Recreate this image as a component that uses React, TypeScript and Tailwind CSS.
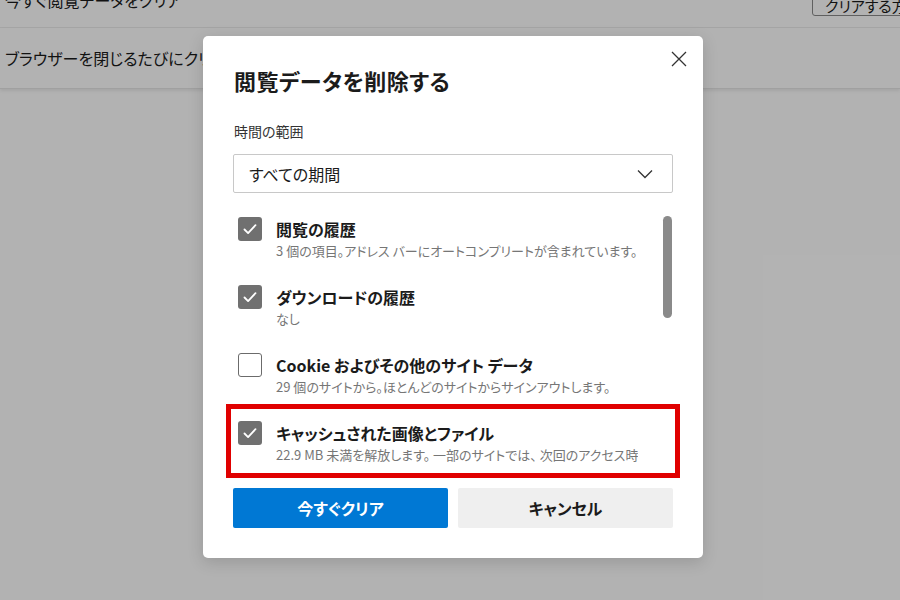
import { useState } from 'react'

const rows = [
  { title: '閲覧の履歴', sub: '3 個の項目。アドレス バーにオートコンプリートが含まれています。', checked: true },
  { title: 'ダウンロードの履歴', sub: 'なし', checked: true },
  { title: 'Cookie およびその他のサイト データ', sub: '29 個のサイトから。ほとんどのサイトからサインアウトします。', checked: false },
  { title: 'キャッシュされた画像とファイル', sub: '22.9 MB 未満を解放します。 一部のサイトでは、 次回のアクセス時', checked: true, marked: true },
]

const Check = ({ on }: { on: boolean }) =>
  on ? (
    <div className="w-[24px] h-[24px] rounded-[3px] bg-[#707070] flex items-center justify-center shrink-0">
      <svg width="16" height="16" viewBox="0 0 16 16" fill="none">
        <path d="M2.5 8.5l3.6 3.6L13.5 4.2" stroke="white" strokeWidth="1.8" strokeLinecap="round" strokeLinejoin="round" />
      </svg>
    </div>
  ) : (
    <div className="w-[24px] h-[24px] rounded-[3px] border border-[#6b6b6b] bg-white shrink-0" />
  )

export default function App() {
  const [items, setItems] = useState(rows)

  return (
    <div className="relative w-[900px] h-[600px] overflow-hidden bg-white font-['Noto_Sans_CJK_JP',sans-serif] [font-feature-settings:'palt'] text-[#1b1b1b]">
      {/* page behind */}
      <div className="flex items-start h-[28px] border-b border-[#ececec]">
        <div className="pl-[5px] text-[16px] leading-[16px] -mt-[8px]">今すぐ閲覧データをクリア</div>
        <div className="ml-auto mr-[-40px] -mt-[10px] h-[26px] w-[128px] border border-[#8a8a8a] rounded-[3px] px-[12px] text-[15px] leading-[30px] whitespace-nowrap overflow-hidden">
          クリアする方法
        </div>
      </div>
      <div className="h-[61px] flex items-center pl-[5px] text-[16px] border-b border-[#e6e6e6] shadow-[0_2px_3px_rgba(0,0,0,0.08)]">
        ブラウザーを閉じるたびにクリアするデータを選択する
      </div>

      {/* dim */}
      <div className="absolute inset-0 bg-black/30" />

      {/* dialog */}
      <div className="absolute left-[203px] top-[36px] w-[500px] bg-white rounded-[5px] shadow-[0_4px_16px_rgba(0,0,0,0.15)] pl-[30px] pr-[30px] pt-[29px] pb-[30px]">
        <button className="absolute right-[16px] top-[15px] w-[16px] h-[16px]">
          <svg width="16" height="16" viewBox="0 0 16 16">
            <path d="M1 1l14 14M15 1L1 15" stroke="#333" strokeWidth="1.3" />
          </svg>
        </button>

        <h2 className="text-[22px] leading-[30px] font-semibold tracking-[0.5px] pl-[1px]">閲覧データを削除する</h2>

        <div className="mt-[26px] text-[14px] leading-[20px] text-[#333] pl-[1px]">時間の範囲</div>
        <div className="mt-[13px] h-[39px] border border-[#c8c8c8] rounded-[2px] flex items-center pl-[15px] pr-[19px]">
          <span className="text-[16px]">すべての期間</span>
          <svg className="ml-auto" width="16" height="10" viewBox="0 0 16 10">
            <path d="M1 1.5l7 7 7-7" stroke="#333" strokeWidth="1.3" fill="none" />
          </svg>
        </div>

        <div className="mt-[23px] h-[261px] flex">
          <div className="flex-1 min-w-0 flex flex-col gap-[24px] pt-[1px]">
            {items.map((r, i) => (
              <div key={r.title} className="relative flex gap-[14px] pl-[5px]" onClick={() => setItems(items.map((x, j) => (j === i ? { ...x, checked: !x.checked } : x)))}>
                <Check on={r.checked} />
                <div className="min-w-0 overflow-hidden">
                  <div className="text-[16px] leading-[24px] font-bold whitespace-nowrap">{r.title}</div>
                  <div className="text-[13px] leading-[20px] text-[#767676] whitespace-nowrap">{r.sub}</div>
                </div>
                {r.marked && (
                  <div className="absolute left-[-7px] right-[-17px] top-[-17px] bottom-[-13px] border-[5px] border-[#e00000] pointer-events-none" />
                )}
              </div>
            ))}
          </div>
          <div className="w-[10px] shrink-0">
            <div className="h-[102px] w-[9px] rounded-full bg-[#8a8a8a]" />
          </div>
        </div>

        <div className="mt-[11px] flex gap-[10px]">
          <button className="flex-1 h-[40px] rounded-[2px] bg-[#0078d4] text-white text-[16px] font-bold">今すぐクリア</button>
          <button className="flex-1 h-[40px] rounded-[2px] bg-[#efefef] text-[#1b1b1b] text-[16px] font-bold">キャンセル</button>
        </div>
      </div>
    </div>
  )
}
